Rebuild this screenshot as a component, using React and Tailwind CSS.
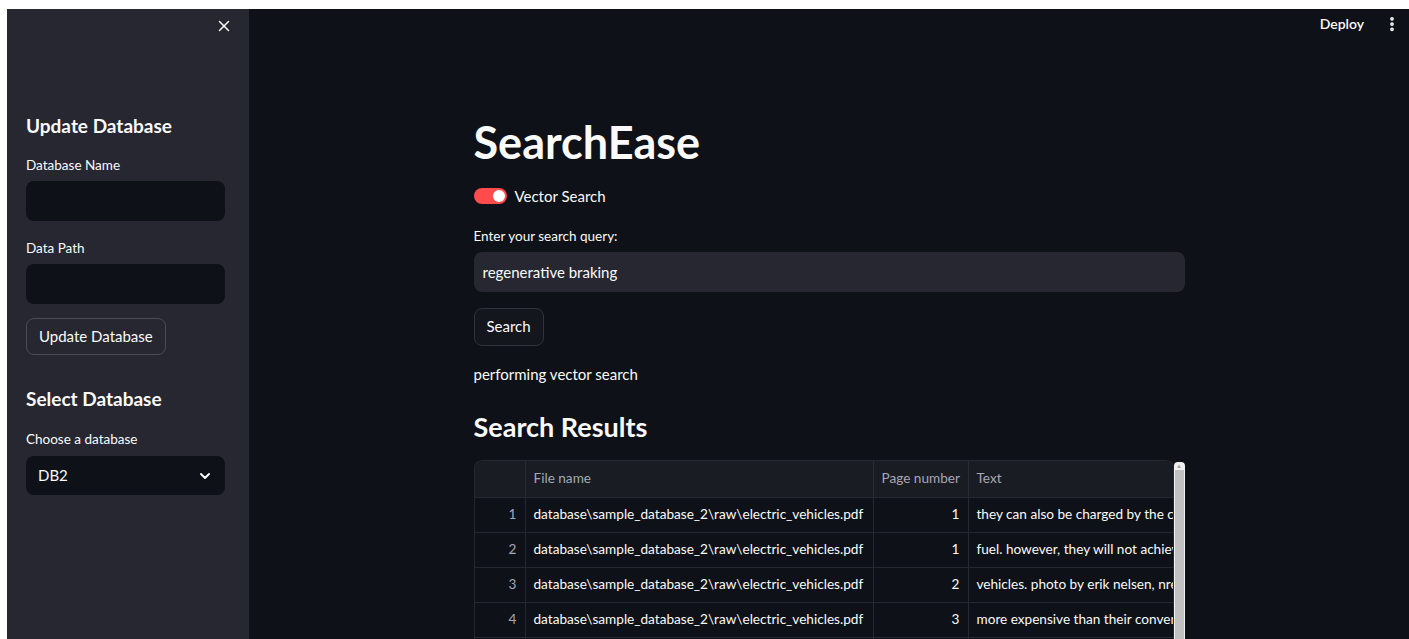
import { useState } from "react";
import { X, ChevronDown, EllipsisVertical } from "lucide-react";

const rows = [
  { file: "database\\sample_database_2\\raw\\electric_vehicles.pdf", page: 1, text: "they can also be charged by the conventional grid" },
  { file: "database\\sample_database_2\\raw\\electric_vehicles.pdf", page: 1, text: "fuel. however, they will not achieve the same range" },
  { file: "database\\sample_database_2\\raw\\electric_vehicles.pdf", page: 2, text: "vehicles. photo by erik nelsen, nrel" },
  { file: "database\\sample_database_2\\raw\\electric_vehicles.pdf", page: 3, text: "more expensive than their conventional counterparts" },
  { file: "database\\sample_database_2\\raw\\electric_vehicles.pdf", page: 4, text: "batteries" },
];

function Sidebar() {
  return (
    <aside className="w-[242px] shrink-0 bg-[#262730] px-[19px] relative">
      <button className="absolute right-[16px] top-[8px] text-[#fafafa]">
        <X size={18} strokeWidth={2} />
      </button>

      <h2 className="mt-[105px] text-[19px] font-bold text-[#fafafa] leading-6">Update Database</h2>

      <label className="block mt-[19px] text-[13.5px] text-[#fafafa] leading-4">Database Name</label>
      <input className="mt-[8px] w-[199px] h-[40px] rounded-lg bg-[#0e1117] outline-none px-3 text-[#fafafa]" />

      <label className="block mt-[19px] text-[13.5px] text-[#fafafa] leading-4">Data Path</label>
      <input className="mt-[8px] w-[199px] h-[40px] rounded-lg bg-[#0e1117] outline-none px-3 text-[#fafafa]" />

      <button className="mt-[14px] h-[37px] px-[12px] rounded-lg border border-[#4b4c55] text-[15px] text-[#fafafa]">
        Update Database
      </button>

      <h2 className="mt-[32px] text-[19px] font-bold text-[#fafafa] leading-6">Select Database</h2>

      <label className="block mt-[20px] text-[13.5px] text-[#fafafa] leading-4">Choose a database</label>
      <div className="mt-[9px] w-[199px] h-[39px] rounded-lg bg-[#0e1117] flex items-center justify-between px-3 text-[15px] text-[#fafafa]">
        <span>DB2</span>
        <ChevronDown size={16} strokeWidth={3} />
      </div>
    </aside>
  );
}

function ResultsTable() {
  return (
    <div className="mt-[17px] flex h-[180px] overflow-hidden">
      <div className="w-[700px] rounded-t-lg border border-[#262730] border-b-0 overflow-hidden text-[13.6px] whitespace-nowrap">
        <div className="flex h-[36px] bg-[#1a1c24] text-[#a3a8b4]">
          <div className="w-[51px] shrink-0 border-r border-[#2a2c35]" />
          <div className="w-[348px] shrink-0 border-r border-[#2a2c35] flex items-center px-2">File name</div>
          <div className="w-[95px] shrink-0 border-r border-[#2a2c35] flex items-center px-2">Page number</div>
          <div className="flex-1 flex items-center px-2">Text</div>
        </div>
        {rows.map((r, i) => (
          <div key={i} className="flex h-[35px] border-t border-[#262730] text-[#fafafa] bg-[#0e1117]">
            <div className="w-[51px] shrink-0 border-r border-[#262730] flex items-center justify-end px-2 text-[#a3a8b4]">{i + 1}</div>
            <div className="w-[348px] shrink-0 border-r border-[#262730] flex items-center px-2">{r.file}</div>
            <div className="w-[95px] shrink-0 border-r border-[#262730] flex items-center justify-end px-2">{r.page}</div>
            <div className="flex-1 min-w-0 flex items-center px-2 overflow-hidden">{r.text}</div>
          </div>
        ))}
      </div>
      {/* scrollbar */}
      <div className="w-[11px] shrink-0 bg-[#f1f1f1] rounded-t-[4px] mt-[2px] flex flex-col items-center px-[1px]">
        <div className="h-[8px] text-[6px] leading-[8px] text-[#a3a3a3]">▲</div>
        <div className="w-full flex-1 bg-[#c1c1c1]" />
      </div>
    </div>
  );
}

export default function App() {
  const [vector, setVector] = useState(true);
  const [query, setQuery] = useState("regenerative braking");

  return (
    <div className="h-[639px] bg-white pl-[7px] pt-[9px] overflow-hidden" style={{ fontFamily: "Lato, 'Noto Sans', sans-serif" }}>
      <div className="flex h-[630px]">
        <Sidebar />

        <main className="flex-1 bg-[#0e1117] relative">
          <div className="absolute right-[8px] top-[4px] flex items-center gap-[19px] text-[#fafafa]">
            <span className="text-[14px] font-semibold">Deploy</span>
            <EllipsisVertical size={18} strokeWidth={3} />
          </div>

          <div className="w-[711px] mx-auto pt-[107px]">
            <h1 className="text-[45px] font-bold text-[#fafafa] leading-[52px]">SearchEase</h1>

            <div className="mt-[17px] flex items-center gap-[8px]">
              <button
                onClick={() => setVector(!vector)}
                className={`w-[33px] h-[16px] rounded-full flex items-center px-[2px] ${vector ? "bg-[#ff4b4b] justify-end" : "bg-[#31333f] justify-start"}`}
              >
                <span className="w-[12px] h-[12px] rounded-full bg-white" />
              </button>
              <span className="text-[15px] text-[#fafafa]">Vector Search</span>
            </div>

            <label className="block mt-[20px] text-[13.5px] text-[#fafafa] leading-4">Enter your search query:</label>
            <input
              value={query}
              onChange={(e) => setQuery(e.target.value)}
              className="mt-[8px] w-[711px] h-[40px] rounded-lg bg-[#262730] outline-none px-[9px] text-[15px] text-[#fafafa]"
            />

            <button className="mt-[16px] h-[38px] px-[12px] rounded-lg border border-[#30323b] bg-[#13161d] text-[15px] text-[#fafafa]">
              Search
            </button>

            <p className="mt-[18px] text-[15px] text-[#fafafa] leading-5">performing vector search</p>

            <h2 className="mt-[27px] text-[27px] font-bold text-[#fafafa] leading-8">Search Results</h2>

            <ResultsTable />
          </div>
        </main>
      </div>
    </div>
  );
}
